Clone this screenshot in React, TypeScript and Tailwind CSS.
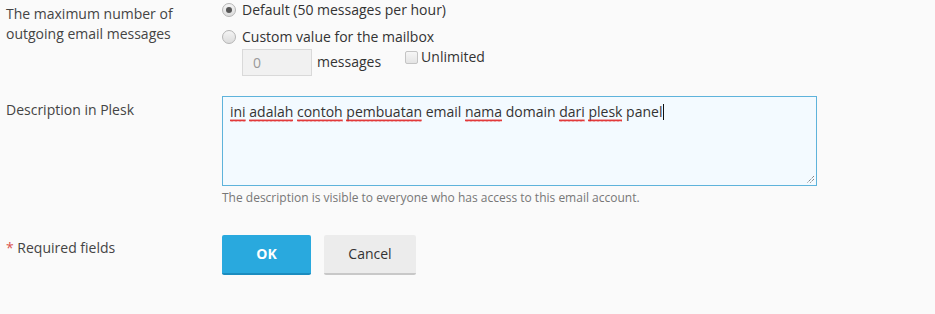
import React from "react";

const Wavy = ({ children }: { children: React.ReactNode }) => (
  <span className="relative inline-block">
    {children}
    <svg className="absolute bottom-[0px] left-0 h-[3px] w-full" preserveAspectRatio="none">
      <defs>
        <pattern id="wv" width="4" height="3" patternUnits="userSpaceOnUse">
          <path d="M0 2.5 L1 0.5 L2 2.5 L3 0.5 L4 2.5" fill="none" stroke="#e02424" strokeWidth="0.9" />
        </pattern>
      </defs>
      <rect width="100%" height="3" fill="url(#wv)" />
    </svg>
  </span>
);

const Radio = ({ checked }: { checked?: boolean }) => (
  <span className="inline-flex h-[14px] w-[14px] shrink-0 items-center justify-center rounded-full border border-[#b5b5b5] bg-gradient-to-b from-[#f4f4f4] to-[#dcdcdc]">
    {checked && <span className="h-[6px] w-[6px] rounded-full bg-[#555]" />}
  </span>
);

export default function App() {
  return (
    <div
      className="h-[314px] w-[935px] bg-[#fafafa] text-[14px] leading-[20px] text-[#333]"
      style={{ fontFamily: '"Open Sans", "Noto Sans", sans-serif' }}
    >
      {/* Row 1 */}
      <div className="flex">
        <div className="w-[222px] shrink-0 pl-[6px] pt-[4px] text-[#444]">
          The maximum number of
          <br />
          outgoing email messages
        </div>
        <div className="flex flex-col">
          <label className="flex h-[20px] items-center gap-[6px]">
            <Radio checked />
            <span>Default (50 messages per hour)</span>
          </label>
          <label className="mt-[7px] flex h-[20px] items-center gap-[6px]">
            <Radio />
            <span>Custom value for the mailbox</span>
          </label>
          <div className="mt-[2px] flex items-start pl-[20px]">
            <div className="flex h-[27px] w-[70px] items-center border border-[#d9d9d9] bg-[#f1f1f1] pl-[10px] text-[#999]">
              0
            </div>
            <div className="ml-[5px] mt-[3px] h-[20px] leading-[20px]">messages</div>
            <label className="ml-[24px] mt-[-2px] flex items-center gap-[3px]">
              <span className="h-[13px] w-[13px] rounded-[2px] border border-[#c4c4c4] bg-gradient-to-b from-[#f6f6f6] to-[#e4e4e4]" />
              <span>Unlimited</span>
            </label>
          </div>
        </div>
      </div>

      {/* Row 2 */}
      <div className="mt-[20px] flex">
        <div className="w-[222px] shrink-0 pl-[6px] pt-[4px] text-[#444]">Description in Plesk</div>
        <div className="flex flex-col">
          <div className="relative h-[90px] w-[595px] border border-[#5eb3db] bg-[#f3faff] px-[7px] pt-[4px] text-[#333]">
            <span>
              <Wavy>ini</Wavy> <Wavy>adalah</Wavy> <Wavy>contoh</Wavy> <Wavy>pembuatan</Wavy> email{" "}
              <Wavy>nama</Wavy> domain <Wavy>dari</Wavy> <Wavy>plesk</Wavy> panel
            </span>
            <span className="ml-[1px] inline-block h-[16px] w-[1px] translate-y-[3px] bg-[#111]" />
            <svg className="absolute bottom-[1px] right-[1px]" width="10" height="10" viewBox="0 0 10 10">
              <path d="M9 2 L2 9 M9 5 L5 9" stroke="#555" strokeWidth="1" strokeDasharray="1 1" />
            </svg>
          </div>
          <div className="mt-[4px] text-[12px] leading-[16px] text-[#777]">
            The description is visible to everyone who has access to this email account.
          </div>
        </div>
      </div>

      {/* Row 3 */}
      <div className="mt-[29px] flex">
        <div className="w-[222px] shrink-0 pl-[6px] pt-[3px] text-[#444]">
          <span className="text-[#d9534f]">*</span> Required fields
        </div>
        <div className="flex gap-[13px]">
          <button className="h-[40px] w-[89px] rounded-[2px] border-b-[2px] border-[#1b8cbf] bg-[#29a9de] text-[14px] font-bold text-white">
            OK
          </button>
          <button className="h-[40px] w-[92px] rounded-[2px] border-b-[2px] border-[#c8c8c8] bg-[#ececec] text-[14px] text-[#333]">
            Cancel
          </button>
        </div>
      </div>
    </div>
  );
}
